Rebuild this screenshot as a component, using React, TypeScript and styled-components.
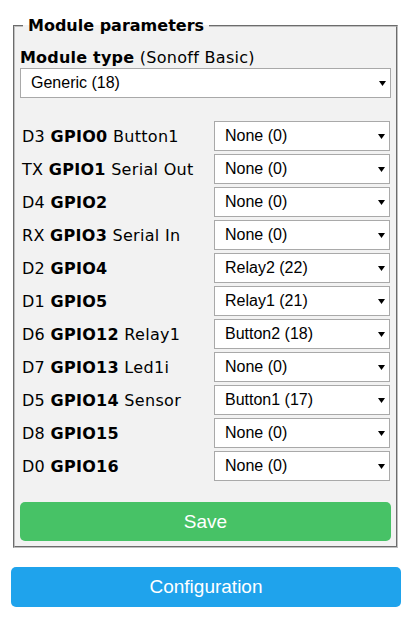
import React from "react";
import styled, { createGlobalStyle } from "styled-components";

const GlobalStyle = createGlobalStyle`
	body {
		margin: 0;
		background-color: #ffffff;
		color: #000000;
		font-family: "DejaVu Sans", Verdana, sans-serif;
	}
`;

const gpios = [
	{ pin: "D3", name: "GPIO0", fn: "Button1", value: "None (0)" },
	{ pin: "TX", name: "GPIO1", fn: "Serial Out", value: "None (0)" },
	{ pin: "D4", name: "GPIO2", fn: "", value: "None (0)" },
	{ pin: "RX", name: "GPIO3", fn: "Serial In", value: "None (0)" },
	{ pin: "D2", name: "GPIO4", fn: "", value: "Relay2 (22)" },
	{ pin: "D1", name: "GPIO5", fn: "", value: "Relay1 (21)" },
	{ pin: "D6", name: "GPIO12", fn: "Relay1", value: "Button2 (18)" },
	{ pin: "D7", name: "GPIO13", fn: "Led1i", value: "None (0)" },
	{ pin: "D5", name: "GPIO14", fn: "Sensor", value: "Button1 (17)" },
	{ pin: "D8", name: "GPIO15", fn: "", value: "None (0)" },
	{ pin: "D0", name: "GPIO16", fn: "", value: "None (0)" },
];

const Arrow = () => (
	<svg width='7' height='5' viewBox='0 0 7 5'>
		<path d='M0 0 L7 0 L3.5 5 Z' fill='#000' />
	</svg>
);

const Dropdown = ({ value }: { value: string }) => (
	<Select>
		<span>{value}</span>
		<Arrow />
	</Select>
);

const App = () => {
	return (
		<Page>
			<GlobalStyle />
			<Fieldset>
				<Legend>Module parameters</Legend>
				<TypeLabel>
					<b>Module type</b> (Sonoff Basic)
				</TypeLabel>
				<Dropdown value='Generic (18)' />
				<Table>
					{gpios.map((g) => (
						<React.Fragment key={g.name}>
							<Label>
								{g.pin} <b>{g.name}</b>
								{g.fn ? ` ${g.fn}` : ""}
							</Label>
							<Dropdown value={g.value} />
						</React.Fragment>
					))}
				</Table>
				<Button bc='#47c266'>Save</Button>
			</Fieldset>
			<ConfigHold>
				<Button bc='#1fa3ec'>Configuration</Button>
			</ConfigHold>
		</Page>
	);
};

export default App;

const Page = styled.div`
	width: 390px;
	padding: 16px 11px 14px;
`;

const Fieldset = styled.fieldset`
	margin: 0 3px 0 2px;
	padding: 0 5px 5px;
	border: 2px groove #c0c0c0;
	background-color: #f2f2f2;
	min-width: 0;
`;

const Legend = styled.legend`
	margin-left: 3px;
	padding: 0 5px;
	font-size: 16px;
	font-weight: bold;
	line-height: 20px;
`;

const TypeLabel = styled.div`
	margin-top: 12px;
	font-size: 16px;
	line-height: 20px;
	letter-spacing: 0.3px;

	b {
		letter-spacing: 0.2px;
	}
`;

const Select = styled.div`
	height: 30px;
	box-sizing: border-box;
	display: flex;
	align-items: center;
	justify-content: space-between;
	padding: 0 4px 0 10px;
	background-color: #ffffff;
	border: 1px solid #a9a9a9;
	font-family: "Liberation Sans", Arial, sans-serif;
	font-size: 16px;
`;

const Table = styled.div`
	display: grid;
	grid-template-columns: 1fr 176px;
	column-gap: 4px;
	row-gap: 3px;
	align-items: center;
	margin-top: 23px;
	padding: 0 1px 0 2px;
`;

const Label = styled.div`
	font-size: 16px;
	white-space: nowrap;
	letter-spacing: 0.3px;
`;

const Button = styled.button<{ bc: string }>`
	display: block;
	width: 100%;
	height: 39px;
	margin-top: 21px;
	border: 0;
	border-radius: 5px;
	background-color: ${(props) => props.bc};
	color: #ffffff;
	font-family: "Liberation Sans", Arial, sans-serif;
	font-size: 19px;
	cursor: pointer;
`;

const ConfigHold = styled.div`
	margin-top: -2px;

	button {
		height: 40px;
	}
`;
